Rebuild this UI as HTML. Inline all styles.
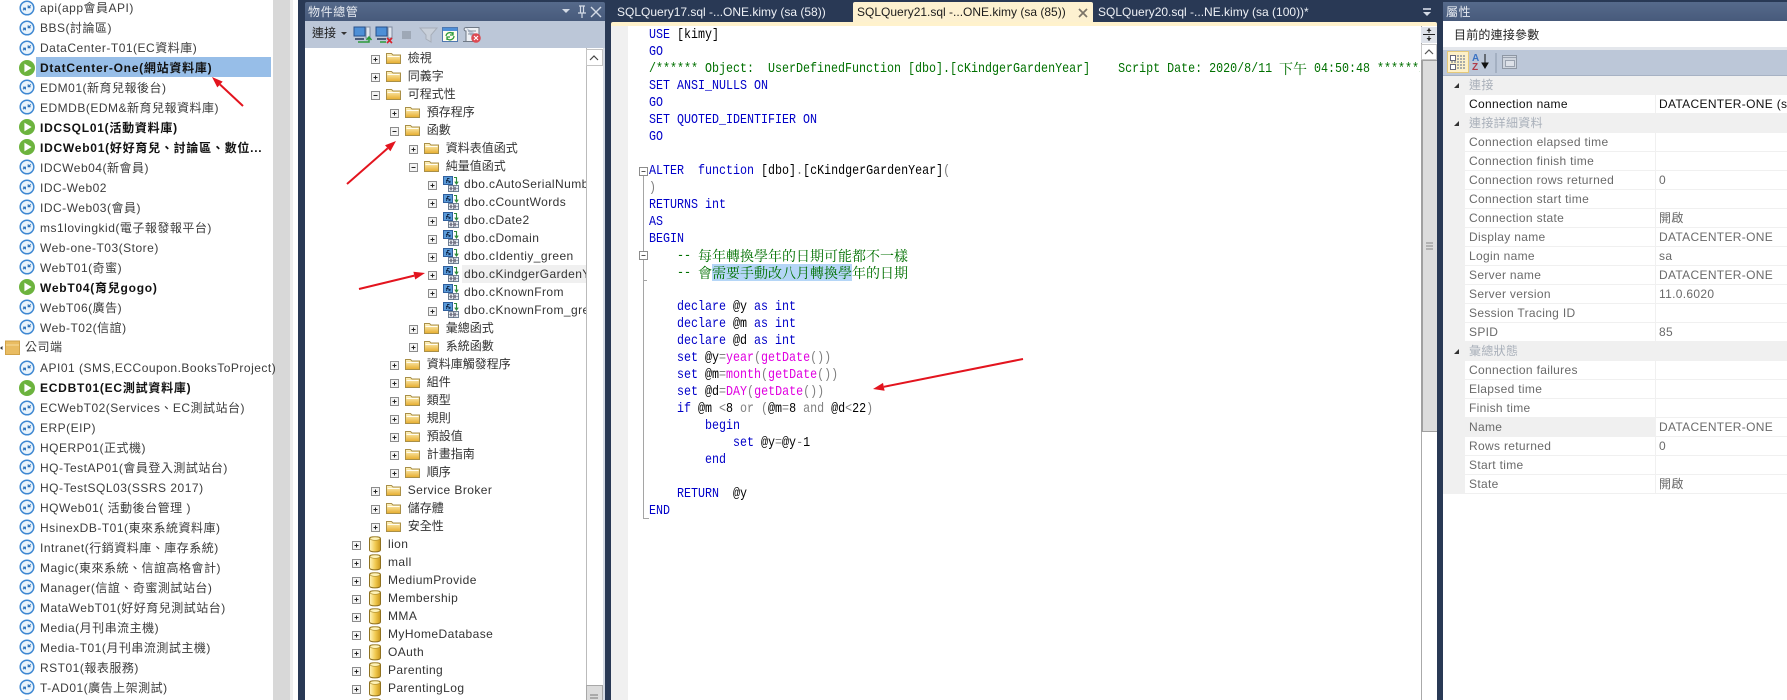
<!DOCTYPE html>
<html><head><meta charset="utf-8"><title>SSMS</title>
<style>
html,body{margin:0;padding:0;width:1787px;height:700px;overflow:hidden;background:#293955}
body{position:relative;font:12px/18px "Liberation Sans","Noto Sans CJK TC",sans-serif;color:#333}
.b{position:absolute}
.t{position:absolute;white-space:pre;line-height:20px;height:20px}
#left .t{left:40px;letter-spacing:.5px;color:#3c3c3c}
#left .t.s{font-weight:bold;color:#111;letter-spacing:.75px}
#tree{position:absolute;left:305px;top:48px;width:281px;height:652px;overflow:hidden;background:#fff}
#tree .t{line-height:18px;height:18px;color:#333;letter-spacing:0}
#tree .a{letter-spacing:.42px}
.l,.h{position:absolute;white-space:pre;line-height:17px;height:17px}
.l{left:649px;font:14px/17px "Liberation Mono",monospace;transform:scaleX(.83333);transform-origin:0 0;color:#000}
.h{font:14px/17px "Noto Serif CJK SC","Noto Sans CJK TC",serif;color:#007000}
.k{color:#0000c8}.g{color:#808080}.m{color:#e000e0}.c{color:#007000}
#code{position:absolute;left:0;top:0;width:1420px;height:700px;overflow:hidden}
.tab{position:absolute;top:3px;height:19px;line-height:19px;white-space:pre;color:#eef1f6}
.p{position:absolute;left:1465px;width:322px;height:18px;border-bottom:1px solid #f0f0f0;line-height:19px;color:#6a6a6a;letter-spacing:.32px;white-space:pre;overflow:hidden}
.p i{font-style:normal;position:absolute;left:4px;top:0}
.p u{text-decoration:none;position:absolute;left:194px;top:0}
.cat{left:1443px;width:344px;background:#f0f0f0;color:#a9b0ba;border:0;height:19px}
.cat i{left:26px}
svg{position:absolute;left:0;top:0}
</style></head>
<body>
<!-- left server list -->
<div class="b" style="left:0;top:0;width:273px;height:700px;background:#fff"></div>
<div class="b" style="left:273px;top:0;width:17px;height:700px;background:#d8d8d8"></div>
<div class="b" style="left:290px;top:0;width:3px;height:700px;background:#eeeeee"></div>
<div class="b" style="left:293px;top:0;width:5px;height:700px;background:#fff"></div>
<div class="b" style="left:36px;top:57px;width:235px;height:20px;background:#97bee8"></div>
<div id="left">
<div class="t" style="top:-2px">api(app會員API)</div>
<div class="t" style="top:18px">BBS(討論區)</div>
<div class="t" style="top:38px">DataCenter-T01(EC資料庫)</div>
<div class="t s" style="top:58px">DtatCenter-One(網站資料庫)</div>
<div class="t" style="top:78px">EDM01(新育兒報後台)</div>
<div class="t" style="top:98px">EDMDB(EDM&amp;新育兒報資料庫)</div>
<div class="t s" style="top:118px">IDCSQL01(活動資料庫)</div>
<div class="t s" style="top:138px">IDCWeb01(好好育兒、討論區、數位...</div>
<div class="t" style="top:158px">IDCWeb04(新會員)</div>
<div class="t" style="top:178px">IDC-Web02</div>
<div class="t" style="top:198px">IDC-Web03(會員)</div>
<div class="t" style="top:218px">ms1lovingkid(電子報發報平台)</div>
<div class="t" style="top:238px">Web-one-T03(Store)</div>
<div class="t" style="top:258px">WebT01(奇蜜)</div>
<div class="t s" style="top:278px">WebT04(育兒gogo)</div>
<div class="t" style="top:298px">WebT06(廣告)</div>
<div class="t" style="top:318px">Web-T02(信誼)</div>
<div class="t" style="top:337px;left:25px">公司端</div>
<div class="t" style="top:358px">API01 (SMS,ECCoupon.BooksToProject)</div>
<div class="t s" style="top:378px">ECDBT01(EC測試資料庫)</div>
<div class="t" style="top:398px">ECWebT02(Services、EC測試站台)</div>
<div class="t" style="top:418px">ERP(EIP)</div>
<div class="t" style="top:438px">HQERP01(正式機)</div>
<div class="t" style="top:458px">HQ-TestAP01(會員登入測試站台)</div>
<div class="t" style="top:478px">HQ-TestSQL03(SSRS 2017)</div>
<div class="t" style="top:498px">HQWeb01( 活動後台管理 )</div>
<div class="t" style="top:518px">HsinexDB-T01(東來系統資料庫)</div>
<div class="t" style="top:538px">Intranet(行銷資料庫、庫存系統)</div>
<div class="t" style="top:558px">Magic(東來系統、信誼高格會計)</div>
<div class="t" style="top:578px">Manager(信誼、奇蜜測試站台)</div>
<div class="t" style="top:598px">MataWebT01(好好育兒測試站台)</div>
<div class="t" style="top:618px">Media(月刊串流主機)</div>
<div class="t" style="top:638px">Media-T01(月刊串流測試主機)</div>
<div class="t" style="top:658px">RST01(報表服務)</div>
<div class="t" style="top:678px">T-AD01(廣告上架測試)</div>
</div>

<!-- object explorer -->
<div class="b" style="left:305px;top:2px;width:300px;height:19px;background:linear-gradient(#566a8b,#475a7b);border-radius:2px 2px 0 0"></div>
<div class="b" style="left:305px;top:21px;width:300px;height:27px;background:#bcc7d8"></div>
<div class="b" style="left:603px;top:48px;width:2px;height:652px;background:#d4dae4"></div>
<div class="b" style="left:308px;top:3px;height:18px;color:#e6eaf1;letter-spacing:.6px;white-space:pre">物件總管</div>
<div class="b" style="left:312px;top:24px;height:18px;color:#222">連接</div>
<div id="tree">
<div class="b" style="left:157px;top:217px;width:124px;height:18px;background:#f0f0f0"></div>
<div class="t" style="left:102.7px;top:1px">檢視</div>
<div class="t" style="left:102.7px;top:19px">同義字</div>
<div class="t" style="left:102.7px;top:37px">可程式性</div>
<div class="t" style="left:121.7px;top:55px">預存程序</div>
<div class="t" style="left:121.7px;top:73px">函數</div>
<div class="t" style="left:140.7px;top:91px">資料表值函式</div>
<div class="t" style="left:140.7px;top:109px">純量值函式</div>
<div class="t a" style="left:159px;top:127px">dbo.cAutoSerialNumber</div>
<div class="t a" style="left:159px;top:145px">dbo.cCountWords</div>
<div class="t a" style="left:159px;top:163px">dbo.cDate2</div>
<div class="t a" style="left:159px;top:181px">dbo.cDomain</div>
<div class="t a" style="left:159px;top:199px">dbo.cIdentiy_green</div>
<div class="t a" style="left:159px;top:217px">dbo.cKindgerGardenYear</div>
<div class="t a" style="left:159px;top:235px">dbo.cKnownFrom</div>
<div class="t a" style="left:159px;top:253px">dbo.cKnownFrom_green</div>
<div class="t" style="left:140.7px;top:271px">彙總函式</div>
<div class="t" style="left:140.7px;top:289px">系統函數</div>
<div class="t" style="left:121.7px;top:307px">資料庫觸發程序</div>
<div class="t" style="left:121.7px;top:325px">組件</div>
<div class="t" style="left:121.7px;top:343px">類型</div>
<div class="t" style="left:121.7px;top:361px">規則</div>
<div class="t" style="left:121.7px;top:379px">預設值</div>
<div class="t" style="left:121.7px;top:397px">計畫指南</div>
<div class="t" style="left:121.7px;top:415px">順序</div>
<div class="t a" style="left:102.7px;top:433px">Service Broker</div>
<div class="t" style="left:102.7px;top:451px">儲存體</div>
<div class="t" style="left:102.7px;top:469px">安全性</div>
<div class="t a" style="left:83px;top:487px">lion</div>
<div class="t a" style="left:83px;top:505px">mall</div>
<div class="t a" style="left:83px;top:523px">MediumProvide</div>
<div class="t a" style="left:83px;top:541px">Membership</div>
<div class="t a" style="left:83px;top:559px">MMA</div>
<div class="t a" style="left:83px;top:577px">MyHomeDatabase</div>
<div class="t a" style="left:83px;top:595px">OAuth</div>
<div class="t a" style="left:83px;top:613px">Parenting</div>
<div class="t a" style="left:83px;top:631px">ParentingLog</div>
</div>
<div class="b" style="left:586px;top:48px;width:17px;height:652px;background:#fff;box-sizing:border-box;border-left:1px solid #bbb"></div>
<div class="b" style="left:586px;top:49px;width:17px;height:17px;background:#fff;box-sizing:border-box;border:1px solid #c4c4c4"></div>
<div class="b" style="left:586px;top:685px;width:17px;height:15px;background:#dcdcdc;box-sizing:border-box;border:1px solid #a8a8a8;border-bottom:0"></div>

<!-- editor -->
<div class="tab" style="left:617px">SQLQuery17.sql -...ONE.kimy (sa (58))</div>
<div class="b" style="left:853px;top:2px;width:240px;height:20px;background:#fdf1d0;border-radius:2px 2px 0 0"></div>
<div class="tab" style="left:857px;color:#1c1c1c">SQLQuery21.sql -...ONE.kimy (sa (85))</div>
<div class="tab" style="left:1098px">SQLQuery20.sql -...NE.kimy (sa (100))*</div>
<div class="b" style="left:611px;top:22px;width:826px;height:4px;background:#fff2cc;border-radius:2px 2px 0 0"></div>
<div class="b" style="left:611px;top:26px;width:826px;height:674px;background:#fff"></div>
<div class="b" style="left:611px;top:26px;width:17px;height:674px;background:#f0f0f0"></div>
<div class="b" style="left:712px;top:264px;width:140px;height:17px;background:#b5d6f7"></div>
<div id="code">
<div class="l" style="top:27px"><span class="k">USE</span> [kimy]</div>
<div class="l k" style="top:44px">GO</div>
<div class="l c" style="top:61px">/****** Object:  UserDefinedFunction [dbo].[cKindgerGardenYear]    Script Date: 2020/8/11 </div>
<div class="h" style="left:1279px;top:61px">下午</div>
<div class="l c" style="left:1314px;top:61px">04:50:48 ******/</div>
<div class="l k" style="top:78px">SET ANSI_NULLS ON</div>
<div class="l k" style="top:95px">GO</div>
<div class="l k" style="top:112px">SET QUOTED_IDENTIFIER ON</div>
<div class="l k" style="top:129px">GO</div>
<div class="l" style="top:163px"><span class="k">ALTER</span>  <span class="k">function</span> [dbo]<span class="g">.</span>[cKindgerGardenYear]<span class="g">(</span></div>
<div class="l g" style="top:180px">)</div>
<div class="l" style="top:197px"><span class="k">RETURNS</span> <span class="k">int</span></div>
<div class="l k" style="top:214px">AS</div>
<div class="l k" style="top:231px">BEGIN</div>
<div class="l c" style="top:248px">    --</div>
<div class="h" style="left:698px;top:248px">每年轉換學年的日期可能都不一樣</div>
<div class="l c" style="top:265px">    --</div>
<div class="h" style="left:698px;top:265px">會需要手動改八月轉換學年的日期</div>
<div class="l" style="top:299px">    <span class="k">declare</span> @y <span class="k">as</span> <span class="k">int</span></div>
<div class="l" style="top:316px">    <span class="k">declare</span> @m <span class="k">as</span> <span class="k">int</span></div>
<div class="l" style="top:333px">    <span class="k">declare</span> @d <span class="k">as</span> <span class="k">int</span></div>
<div class="l" style="top:350px">    <span class="k">set</span> @y<span class="g">=</span><span class="m">year</span><span class="g">(</span><span class="m">getDate</span><span class="g">())</span></div>
<div class="l" style="top:367px">    <span class="k">set</span> @m<span class="g">=</span><span class="m">month</span><span class="g">(</span><span class="m">getDate</span><span class="g">())</span></div>
<div class="l" style="top:384px">    <span class="k">set</span> @d<span class="g">=</span><span class="m">DAY</span><span class="g">(</span><span class="m">getDate</span><span class="g">())</span></div>
<div class="l" style="top:401px">    <span class="k">if</span> @m <span class="g">&lt;</span>8 <span class="g">or (</span>@m<span class="g">=</span>8 <span class="g">and</span> @d<span class="g">&lt;</span>22<span class="g">)</span></div>
<div class="l k" style="top:418px">        begin</div>
<div class="l" style="top:435px">            <span class="k">set</span> @y<span class="g">=</span>@y<span class="g">-</span>1</div>
<div class="l k" style="top:452px">        end</div>
<div class="l" style="top:486px">    <span class="k">RETURN</span>  @y</div>
<div class="l k" style="top:503px">END</div>
</div>
<!-- editor scrollbar -->
<div class="b" style="left:1421px;top:26px;width:16px;height:674px;background:#fff;box-sizing:border-box;border-left:1px solid #aaa"></div>
<div class="b" style="left:1421px;top:27px;width:16px;height:16px;background:#dfe3ea"></div>
<div class="b" style="left:1421px;top:44px;width:16px;height:16px;background:#fff;box-sizing:border-box;border:1px solid #c8c8c8"></div>
<div class="b" style="left:1421px;top:60px;width:16px;height:372px;background:#dcdcdc;box-sizing:border-box;border-left:2px solid #a0a0a0;border-top:1px solid #a0a0a0;border-bottom:1px solid #a0a0a0"></div>

<!-- properties -->
<div class="b" style="left:1443px;top:2px;width:344px;height:19px;background:linear-gradient(#566a8b,#475a7b)"></div>
<div class="b" style="left:1446px;top:3px;height:18px;color:#e6eaf1;letter-spacing:.6px">屬性</div>
<div class="b" style="left:1443px;top:21px;width:344px;height:679px;background:#fff"></div>
<div class="b" style="left:1454px;top:26px;height:18px;color:#222;letter-spacing:.2px">目前的連接參數</div>
<div class="b" style="left:1443px;top:47px;width:344px;height:3px;background:#e4e7ec"></div>
<div class="b" style="left:1443px;top:50px;width:344px;height:25px;background:#bcc7d8"></div>
<div class="b" style="left:1443px;top:75px;width:344px;height:1px;background:#a7b2c4"></div>
<div class="b" style="left:1443px;top:76px;width:22px;height:418px;background:#f0f0f0"></div>
<div class="p cat" style="top:76px"><i>連接</i></div>
<div class="p" style="top:95px;color:#111"><i>Connection name</i><u>DATACENTER-ONE (sa)</u></div>
<div class="p cat" style="top:114px"><i>連接詳細資料</i></div>
<div class="p" style="top:133px"><i>Connection elapsed time</i></div>
<div class="p" style="top:152px"><i>Connection finish time</i></div>
<div class="p" style="top:171px"><i>Connection rows returned</i><u>0</u></div>
<div class="p" style="top:190px"><i>Connection start time</i></div>
<div class="p" style="top:209px"><i>Connection state</i><u>開啟</u></div>
<div class="p" style="top:228px"><i>Display name</i><u>DATACENTER-ONE</u></div>
<div class="p" style="top:247px"><i>Login name</i><u>sa</u></div>
<div class="p" style="top:266px"><i>Server name</i><u>DATACENTER-ONE</u></div>
<div class="p" style="top:285px"><i>Server version</i><u>11.0.6020</u></div>
<div class="p" style="top:304px"><i>Session Tracing ID</i></div>
<div class="p" style="top:323px"><i>SPID</i><u>85</u></div>
<div class="p cat" style="top:342px"><i>彙總狀態</i></div>
<div class="p" style="top:361px"><i>Connection failures</i></div>
<div class="p" style="top:380px"><i>Elapsed time</i></div>
<div class="p" style="top:399px"><i>Finish time</i></div>
<div class="b" style="left:1465px;top:418px;width:190px;height:19px;background:#f0f0f0"></div>
<div class="p" style="top:418px"><i>Name</i><u>DATACENTER-ONE</u></div>
<div class="p" style="top:437px"><i>Rows returned</i><u>0</u></div>
<div class="p" style="top:456px"><i>Start time</i></div>
<div class="p" style="top:475px"><i>State</i><u>開啟</u></div>
<div class="b" style="left:1655px;top:95px;width:1px;height:19px;background:#f0f0f0"></div>
<div class="b" style="left:1655px;top:133px;width:1px;height:209px;background:#f0f0f0"></div>
<div class="b" style="left:1655px;top:361px;width:1px;height:133px;background:#f0f0f0"></div>

<svg width="1787" height="700" viewBox="0 0 1787 700" xmlns="http://www.w3.org/2000/svg">
<defs>
<linearGradient id="fg" x1="0" y1="0" x2="0" y2="1"><stop offset="0" stop-color="#fff6c8"/><stop offset="1" stop-color="#e6ac2c"/></linearGradient>
<linearGradient id="dg" x1="0" y1="0" x2="1" y2="0"><stop offset="0" stop-color="#fff6c0"/><stop offset=".55" stop-color="#f0c84e"/><stop offset="1" stop-color="#c9971d"/></linearGradient>
<g id="c"><circle r="6.8" fill="#eaf4fc" stroke="#3f88d2" stroke-width="1.5"/><path d="M-4 2.2 L-1.4 .2 M-4 .2 L-1.6 .2 L-1.6 2.4 M3.8 -2.6 L1.4 -.4 M1.2 -2.6 V-.3 H3.6" fill="none" stroke="#2a6fb8" stroke-width="1.1"/></g>
<g id="s"><circle r="8" fill="#6cb33e"/><path d="M-2.6 -4.4 L4.6 0 L-2.6 4.4 z" fill="#fff"/></g>
<g id="f"><path d="M.5 1.5 H5.5 L7 3 H14.5 V11.5 H.5 z" fill="url(#fg)" stroke="#a98f48" stroke-width="1"/><path d="M1.5 4.5 H13.5" stroke="#fffdf0" stroke-width="1"/></g>
<g id="d"><path d="M.5 2.5 V14 C.5 16.5 11.5 16.5 11.5 14 V2.5 C11.5 .2 .5 .2 .5 2.5 z" fill="url(#dg)" stroke="#8f7120"/><ellipse cx="6" cy="2.6" rx="5" ry="1.7" fill="#fff3b8" stroke="#a98a2c" stroke-width=".6"/></g>
<g id="p"><rect x="-4" y="-4" width="8" height="8" fill="#f4f4f4" stroke="#8c8c8c"/><path d="M-2 0 H2 M0 -2 V2" stroke="#222" stroke-width="1"/></g>
<g id="n"><rect x="-4" y="-4" width="8" height="8" fill="#f4f4f4" stroke="#8c8c8c"/><path d="M-2 0 H2" stroke="#222" stroke-width="1"/></g>
<g id="x"><rect x=".5" y=".5" width="9" height="8" fill="#5b9bd8" stroke="#2f5f9e"/><path d="M3.5 7 L4.5 2.5 H6.5 M3 4.5 H5.5 M5.5 5 L7.5 7 M7.5 5 L5.5 7" stroke="#10284c" fill="none" stroke-width=".9"/><path d="M11 1.5 H13.5 V7 M11.8 5.6 L13.5 8 L15.2 5.6" fill="none" stroke="#2e8b3a" stroke-width="1.1"/><rect x="5.5" y="9.5" width="10" height="6" fill="#e7edf4" stroke="#6f7f93"/><path d="M7 10.5 L9 14.5 M9 10.5 L7 14.5 M11 10.5 L13 14.5 M13 10.5 L11 14.5 M5.5 12.5 H15.5 M10.5 9.5 V15.5" stroke="#556" stroke-width=".6"/></g>
</defs>

<!-- left list icons -->
<use href="#c" x="27" y="8"/><use href="#c" x="27" y="28"/><use href="#c" x="27" y="48"/><use href="#s" x="27" y="68"/><use href="#c" x="27" y="87"/><use href="#c" x="27" y="107"/><use href="#s" x="27" y="127"/><use href="#s" x="27" y="147"/><use href="#c" x="27" y="167"/><use href="#c" x="27" y="187"/><use href="#c" x="27" y="207"/><use href="#c" x="27" y="227"/><use href="#c" x="27" y="247"/><use href="#c" x="27" y="267"/><use href="#s" x="27" y="287"/><use href="#c" x="27" y="307"/><use href="#c" x="27" y="327"/>
<path d="M5.5 341 H19.5 V354.5 H5.5 z" fill="#e9bc62" stroke="#d0a248"/><path d="M6 345 H19" stroke="#f6dc9c"/><path d="M0 348 L2.5 346 V350 z" fill="#333"/>
<use href="#c" x="27" y="368"/><use href="#s" x="27" y="388"/><use href="#c" x="27" y="408"/><use href="#c" x="27" y="428"/><use href="#c" x="27" y="448"/><use href="#c" x="27" y="467"/><use href="#c" x="27" y="487"/><use href="#c" x="27" y="507"/><use href="#c" x="27" y="527"/><use href="#c" x="27" y="547"/><use href="#c" x="27" y="567"/><use href="#c" x="27" y="587"/><use href="#c" x="27" y="607"/><use href="#c" x="27" y="627"/><use href="#c" x="27" y="647"/><use href="#c" x="27" y="667"/><use href="#c" x="27" y="687"/><use href="#c" x="27" y="707"/>

<!-- tree plus/minus -->
<use href="#p" x="375.5" y="59.5"/><use href="#p" x="375.5" y="77.5"/><use href="#n" x="375.5" y="95.5"/>
<use href="#p" x="394.5" y="113.5"/><use href="#n" x="394.5" y="131.5"/>
<use href="#p" x="413.5" y="149.5"/><use href="#n" x="413.5" y="167.5"/>
<use href="#p" x="432.5" y="185.5"/><use href="#p" x="432.5" y="203.5"/><use href="#p" x="432.5" y="221.5"/><use href="#p" x="432.5" y="239.5"/><use href="#p" x="432.5" y="257.5"/><use href="#p" x="432.5" y="275.5"/><use href="#p" x="432.5" y="293.5"/><use href="#p" x="432.5" y="311.5"/>
<use href="#p" x="413.5" y="329.5"/><use href="#p" x="413.5" y="347.5"/>
<use href="#p" x="394.5" y="365.5"/><use href="#p" x="394.5" y="383.5"/><use href="#p" x="394.5" y="401.5"/><use href="#p" x="394.5" y="419.5"/><use href="#p" x="394.5" y="437.5"/><use href="#p" x="394.5" y="455.5"/><use href="#p" x="394.5" y="473.5"/>
<use href="#p" x="375.5" y="491.5"/><use href="#p" x="375.5" y="509.5"/><use href="#p" x="375.5" y="527.5"/>
<use href="#p" x="356.5" y="545.5"/><use href="#p" x="356.5" y="563.5"/><use href="#p" x="356.5" y="581.5"/><use href="#p" x="356.5" y="599.5"/><use href="#p" x="356.5" y="617.5"/><use href="#p" x="356.5" y="635.5"/><use href="#p" x="356.5" y="653.5"/><use href="#p" x="356.5" y="671.5"/><use href="#p" x="356.5" y="689.5"/>
<!-- folders -->
<use href="#f" x="386" y="52"/><use href="#f" x="386" y="70"/><use href="#f" x="386" y="88"/><use href="#f" x="405" y="106"/><use href="#f" x="405" y="124"/><use href="#f" x="424" y="142"/><use href="#f" x="424" y="160"/><use href="#f" x="424" y="322"/><use href="#f" x="424" y="340"/><use href="#f" x="405" y="358"/><use href="#f" x="405" y="376"/><use href="#f" x="405" y="394"/><use href="#f" x="405" y="412"/><use href="#f" x="405" y="430"/><use href="#f" x="405" y="448"/><use href="#f" x="405" y="466"/><use href="#f" x="386" y="484"/><use href="#f" x="386" y="502"/><use href="#f" x="386" y="520"/>
<!-- fx -->
<use href="#x" x="443" y="176"/><use href="#x" x="443" y="194"/><use href="#x" x="443" y="212"/><use href="#x" x="443" y="230"/><use href="#x" x="443" y="248"/><use href="#x" x="443" y="266"/><use href="#x" x="443" y="284"/><use href="#x" x="443" y="302"/>
<!-- db -->
<use href="#d" x="369" y="536"/><use href="#d" x="369" y="554"/><use href="#d" x="369" y="572"/><use href="#d" x="369" y="590"/><use href="#d" x="369" y="608"/><use href="#d" x="369" y="626"/><use href="#d" x="369" y="644"/><use href="#d" x="369" y="662"/><use href="#d" x="369" y="680"/><use href="#d" x="369" y="698"/>

<!-- object explorer title buttons -->
<path d="M562 9 H570 L566 13 z" fill="#d4dbe6"/>
<path d="M579 6 H585 M580.5 6 V13 H583.5 V6 M578 13 H586 M582 13 V18" fill="none" stroke="#d4dbe6" stroke-width="1.2"/>
<path d="M591 7 L601 17 M601 7 L591 17" stroke="#d4dbe6" stroke-width="1.4"/>
<!-- toolbar icons -->
<path d="M341 32 H347 L344 35 z" fill="#333"/>
<rect x="354" y="27" width="11" height="9" fill="#4d8fd6" stroke="#27508c"/><rect x="366" y="27" width="4" height="11" fill="#dfe5ee" stroke="#7f8ba0"/><path d="M355 39 H364" stroke="#4a5a78" stroke-width="2"/>
<path d="M358 42 H369 V38 M366.5 40 L369 37 L371.5 40" fill="none" stroke="#2c9a3a" stroke-width="1.5"/>
<rect x="376" y="27" width="11" height="9" fill="#4d8fd6" stroke="#27508c"/><rect x="388" y="27" width="4" height="11" fill="#dfe5ee" stroke="#7f8ba0"/><path d="M377 39 H386" stroke="#4a5a78" stroke-width="2"/>
<path d="M380 42 H386" stroke="#2c9a3a" stroke-width="1.5"/><path d="M387 38 L392 43 M392 38 L387 43" stroke="#d8202a" stroke-width="1.6"/>
<rect x="402" y="31" width="9" height="8" fill="#9ea8b6"/>
<path d="M420 28 H437 L431 35 V42 L426 39 V35 z" fill="#c9d0da" stroke="#a7aeb9"/>
<rect x="442.5" y="27.5" width="15" height="14" fill="#fffdf0" stroke="#4f78b0"/><rect x="443" y="28" width="14" height="3" fill="#4f8fd8"/>
<path d="M446 36 A4 4 0 0 1 453 34 M454 36 A4 4 0 0 1 447 38.5 M453 32 V35 H450 M447 40 V37 H450" fill="none" stroke="#2c9a3a" stroke-width="1.3"/>
<path d="M466 27.5 H479 V36 M466 27.5 C463 28 464 31 466 31 V41.5 H474 M463 41.5 H474" fill="#eef1f5" stroke="#6f7885"/>
<path d="M468 31 H476 M468 34 H475" stroke="#8a93a0"/>
<circle cx="476" cy="38" r="4.8" fill="#dc4a52"/><path d="M474 36 L478 40 M478 36 L474 40" stroke="#fff" stroke-width="1.1"/>
<!-- tree scroll chevron -->
<path d="M590 60 L594 56 L598 60" fill="none" stroke="#444" stroke-width="1.2"/>
<path d="M590 695 H598 M590 698 H598" stroke="#777"/>

<!-- tab x + dropdown -->
<path d="M1079 9 L1087 17 M1087 9 L1079 17" stroke="#7b7468" stroke-width="1.7"/>
<path d="M1423 9 H1431" stroke="#d4dbe6" stroke-width="1.6"/><path d="M1423 12 H1431 L1427 16 z" fill="#d4dbe6"/>
<!-- fold markers -->
<path d="M643.5 176 V518.5 H649" fill="none" stroke="#a5a5a5"/>
<rect x="639.5" y="167.5" width="8" height="8" fill="#fff" stroke="#8c8c8c"/><path d="M641.5 171.5 H645.5" stroke="#555"/>
<rect x="639.5" y="251.5" width="8" height="8" fill="#fff" stroke="#8c8c8c"/><path d="M641.5 255.5 H645.5" stroke="#555"/>
<path d="M643.5 280.5 H647" stroke="#a5a5a5"/>
<!-- editor scrollbar glyphs -->
<path d="M1423 34.5 H1435" stroke="#222" stroke-width="1"/><path d="M1429 28 V33 M1429 36 V41" stroke="#222"/><path d="M1426.5 31 L1429 28.5 L1431.5 31 z M1426.5 38 L1429 40.5 L1431.5 38 z" fill="#222"/>
<path d="M1425 54 L1429 50 L1433 54" fill="none" stroke="#555" stroke-width="1.2"/>
<path d="M1426 243 H1433 M1426 246 H1433 M1426 249 H1433" stroke="#888"/>

<!-- properties toolbar -->
<rect x="1447.5" y="51.5" width="21" height="21" fill="#fdf0c8" stroke="#e5c97a"/>
<rect x="1450.5" y="55.5" width="5" height="5" fill="#fff" stroke="#667"/><rect x="1450.5" y="64.5" width="5" height="5" fill="#fff" stroke="#667"/>
<path d="M1457 56 H1465 M1457 59 H1465 M1457 65 H1465 M1457 68 H1465 M1451 62 H1465" stroke="#7a8496" stroke-width="1.2" stroke-dasharray="2 1"/>
<text x="1472" y="61" font-family="Liberation Sans" font-size="10" font-weight="bold" fill="#3a72c4">A</text>
<text x="1472" y="70" font-family="Liberation Sans" font-size="10" font-weight="bold" fill="#b03a48">Z</text>
<path d="M1485 54 V67 M1482 63 L1485 68 L1488 63 z" stroke="#111" fill="#111"/>
<path d="M1496 53 V73" stroke="#8c98ab"/>
<rect x="1502.5" y="55.5" width="14" height="13" fill="#cfd5de" stroke="#8e97a4"/><rect x="1505.5" y="60.5" width="9" height="6" fill="#dde1e8" stroke="#9aa2af"/><path d="M1503 57.5 H1516" stroke="#9aa2af"/>
<!-- property category triangles -->
<path d="M1459 83 V88 H1454 z" fill="#333"/><path d="M1459 121 V126 H1454 z" fill="#333"/><path d="M1459 349 V354 H1454 z" fill="#333"/>

<!-- red annotation arrows -->
<g stroke="#e3141e" stroke-width="2" fill="none">
<path d="M243 106 L220 84.5"/><path d="M347 184 L387.7 148.3"/><path d="M359 289 L414.3 275.6"/><path d="M1023 359 L883.8 386.8"/>
</g>
<g fill="#e3141e">
<path d="M212 77 L222.7 81.6 L217.3 87.4 z"/>
<path d="M396 141 L390.4 151.3 L385 145.3 z"/>
<path d="M425 273 L415.2 279.5 L413.4 271.7 z"/>
<path d="M873 389 L884.6 390.7 L883 382.9 z"/>
</g>
</svg>
</body></html>
